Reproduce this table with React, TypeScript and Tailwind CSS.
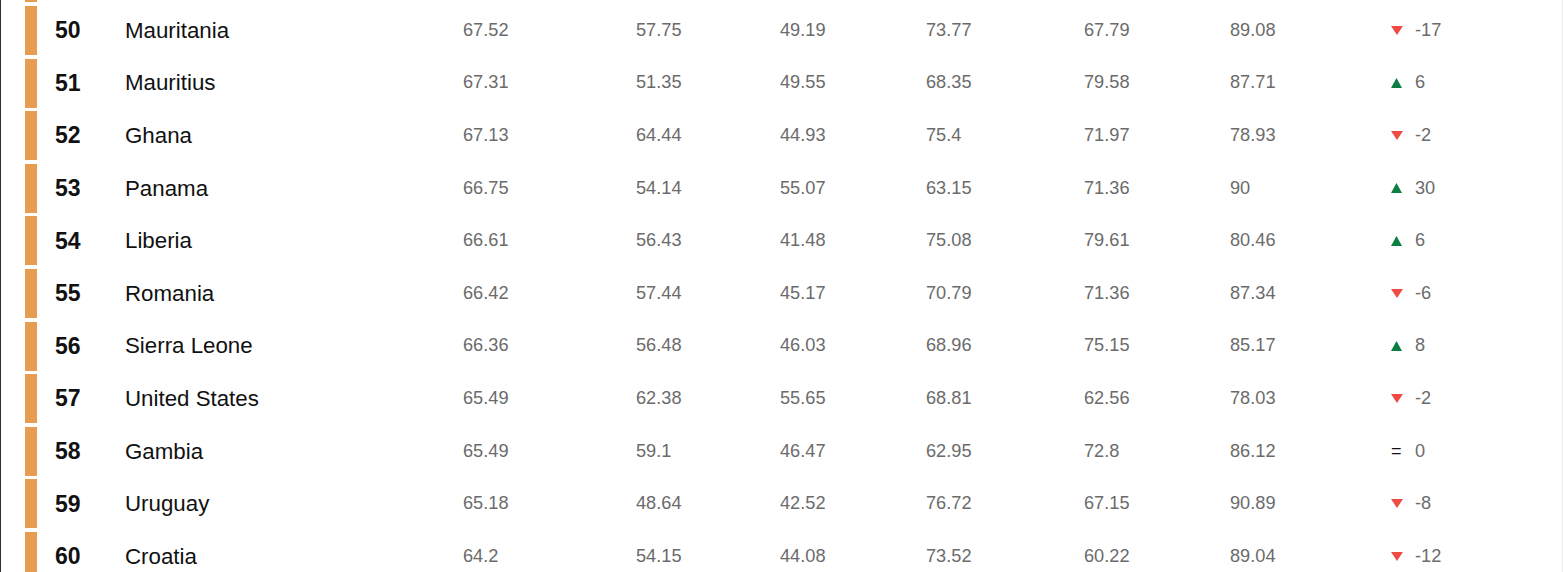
import React from 'react';

type Move = 'up' | 'down' | 'same';

interface Row {
  rank: number;
  country: string;
  scores: string[];
  move: Move;
  change: string;
}

const ROWS: Row[] = [
  { rank: 50, country: 'Mauritania', scores: ['67.52', '57.75', '49.19', '73.77', '67.79', '89.08'], move: 'down', change: '-17' },
  { rank: 51, country: 'Mauritius', scores: ['67.31', '51.35', '49.55', '68.35', '79.58', '87.71'], move: 'up', change: '6' },
  { rank: 52, country: 'Ghana', scores: ['67.13', '64.44', '44.93', '75.4', '71.97', '78.93'], move: 'down', change: '-2' },
  { rank: 53, country: 'Panama', scores: ['66.75', '54.14', '55.07', '63.15', '71.36', '90'], move: 'up', change: '30' },
  { rank: 54, country: 'Liberia', scores: ['66.61', '56.43', '41.48', '75.08', '79.61', '80.46'], move: 'up', change: '6' },
  { rank: 55, country: 'Romania', scores: ['66.42', '57.44', '45.17', '70.79', '71.36', '87.34'], move: 'down', change: '-6' },
  { rank: 56, country: 'Sierra Leone', scores: ['66.36', '56.48', '46.03', '68.96', '75.15', '85.17'], move: 'up', change: '8' },
  { rank: 57, country: 'United States', scores: ['65.49', '62.38', '55.65', '68.81', '62.56', '78.03'], move: 'down', change: '-2' },
  { rank: 58, country: 'Gambia', scores: ['65.49', '59.1', '46.47', '62.95', '72.8', '86.12'], move: 'same', change: '0' },
  { rank: 59, country: 'Uruguay', scores: ['65.18', '48.64', '42.52', '76.72', '67.15', '90.89'], move: 'down', change: '-8' },
  { rank: 60, country: 'Croatia', scores: ['64.2', '54.15', '44.08', '73.52', '60.22', '89.04'], move: 'down', change: '-12' },
];

// widths of the six score columns, measured from the left edge of each number
const SCORE_WIDTHS = ['w-[173px]', 'w-[144px]', 'w-[146px]', 'w-[158px]', 'w-[146px]', 'w-[161px]'];

const MoveIcon: React.FC<{ move: Move }> = ({ move }) => {
  if (move === 'same') {
    return <span className="text-[18px] leading-none text-[#111]">=</span>;
  }
  if (move === 'up') {
    return (
      <svg width="11" height="10" viewBox="0 0 11 10" className="block">
        <polygon points="5.5,0 11,10 0,10" fill="#0b7f43" />
      </svg>
    );
  }
  return (
    <svg width="12" height="9" viewBox="0 0 12 9" className="block">
      <polygon points="0,0 12,0 6,9" fill="#ee4b45" />
    </svg>
  );
};

const RankRow: React.FC<{ row: Row }> = ({ row }) => (
  <div className="flex h-[52.6px] items-center pl-[24px]">
    <div className="h-[49px] w-[12px] shrink-0 bg-[#e69d52]" />
    <div className="ml-[18px] w-[70px] shrink-0 text-[23px] font-bold text-[#111]">{row.rank}</div>
    <div className="w-[338px] shrink-0 text-[22.3px] text-[#111]">{row.country}</div>
    {row.scores.map((s, i) => (
      <div key={i} className={`${SCORE_WIDTHS[i]} shrink-0 text-[18.2px] text-[#6b6b6b]`}>
        {s}
      </div>
    ))}
    <div className="flex w-[24px] shrink-0 items-center">
      <MoveIcon move={row.move} />
    </div>
    <div className="text-[18.2px] text-[#6b6b6b]">{row.change}</div>
  </div>
);

export default function App() {
  return (
    <div
      className="h-[572px] overflow-hidden border-l border-r border-l-[#2f2f2f] border-r-[#ececec] bg-white"
      style={{ fontFamily: '"Liberation Sans", Arial, sans-serif' }}
    >
      {/* tail of the previous row's bar */}
      <div className="h-[4.2px] pl-[24px]">
        <div className="h-[2.4px] w-[12px] bg-[#e69d52]" />
      </div>
      {ROWS.map((row) => (
        <RankRow key={row.rank} row={row} />
      ))}
    </div>
  );
}
